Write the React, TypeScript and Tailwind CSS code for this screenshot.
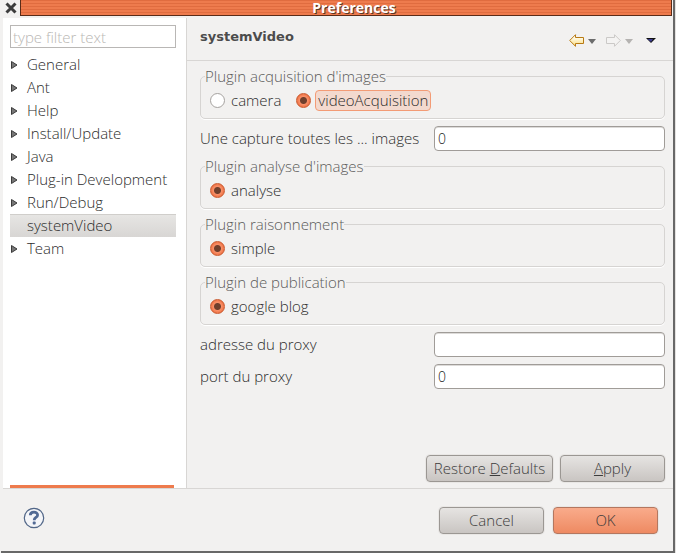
import React, { useState } from "react";

const treeItems = [
  { name: "General", expandable: true },
  { name: "Ant", expandable: true },
  { name: "Help", expandable: true },
  { name: "Install/Update", expandable: true },
  { name: "Java", expandable: true },
  { name: "Plug-in Development", expandable: true },
  { name: "Run/Debug", expandable: true },
  { name: "systemVideo", expandable: false },
  { name: "Team", expandable: true },
];

const buttonBase =
  "h-[27px] rounded-[4px] border text-center text-[15px] leading-[25px] shadow-[0_0_0_1px_#e9e7e5] text-[#3c3c3c]";
const greyButton = `${buttonBase} border-[#9b9793] bg-linear-to-b from-[#e6e4e2] to-[#c9c5c2]`;

function RadioGroup({
  title,
  name,
  options,
  initial,
  focused,
}: {
  title: string;
  name: string;
  options: string[];
  initial: string;
  focused?: boolean;
}) {
  const [value, setValue] = useState(initial);
  return (
    <fieldset className="min-w-0 rounded-[5px] border border-[#d6d4d2] pt-[5px] pb-[7px] pl-[9px] shadow-[0_1px_0_#ffffff]">
      <legend className="-ml-[5px] h-[17px] leading-[17px] whitespace-nowrap text-[#5a5a59]">{title}</legend>
      <div className="flex h-[21px] items-center gap-[13px]">
        {options.map((option) => (
          <label key={option} className="flex items-center gap-1">
            <input
              type="radio"
              name={name}
              checked={value === option}
              onChange={() => setValue(option)}
              className="h-[15px] w-[15px] appearance-none rounded-full border border-[#a5a29f] bg-white checked:border-[#c9592d] checked:bg-[radial-gradient(circle,#703f2c_0px,#703f2c_3px,#fa9068_4px,#ec6f42_7px)]"
            />
            <span
              className={
                focused && value === option
                  ? "flex h-[21px] items-center rounded-[4px] border border-[#f39b75] bg-[#f3d9ce] px-0.5 leading-[19px]"
                  : "flex h-[21px] items-center border border-transparent px-px leading-[19px]"
              }
            >
              {option}
            </span>
          </label>
        ))}
      </div>
    </fieldset>
  );
}

function Field({ id, label, value }: { id: string; label: string; value: string }) {
  return (
    <div className="grid h-[25px] grid-cols-[234px_1fr] items-center">
      <label htmlFor={id} className="whitespace-nowrap">
        {label}
      </label>
      <input
        id={id}
        type="text"
        defaultValue={value}
        className="h-[25px] w-full min-w-0 rounded-[4px] border border-[#a09c98] bg-white px-[3px] text-[14px] text-[#222222] shadow-[inset_0_1px_0_#dddbd9]"
      />
    </div>
  );
}

export default function App() {
  return (
    <div className="flex min-h-screen bg-[#f2f1f0] pl-px font-['Open_Sans','Liberation_Sans',sans-serif] text-[15px] font-light text-[#2c2c2c]">
      <div className="flex min-w-0 flex-1 flex-col border-r-2 border-b-2 border-[#686868] bg-[#f2f1f0]">
        <header className="flex h-4 shrink-0 pr-px">
          <button type="button" aria-label="Close" className="flex w-[19px] items-center justify-center">
            <svg width="14" height="12" viewBox="0 0 14 12">
              <path d="M2.5 1.5L11.5 10.5M11.5 1.5L2.5 10.5" stroke="#3c3c3c" strokeWidth="3" />
            </svg>
          </button>
          <div className="flex min-w-0 flex-1 justify-center border-r border-b border-l border-[#5b2c18] bg-[repeating-linear-gradient(to_bottom,#e06c3f_0px,#e06c3f_1px,#ee7b4d_1px,#ee7b4d_3px)] pl-4">
            <h1 className="text-[14px] leading-[15px] font-bold text-white [text-shadow:1px_1px_0_#5b3526]">Preferences</h1>
          </div>
        </header>

        <div className="mt-0.5 ml-0.5 flex flex-1 border-b border-[#d8d6d4]">
          <aside className="flex w-[184px] shrink-0 flex-col border-r border-[#d8d6d4] bg-white pt-[7px] pl-[7px]">
            <input
              type="text"
              aria-label="Filter"
              placeholder="type filter text"
              className="h-[23px] w-[166px] border border-[#b9b7b5] px-0.5 text-[15px] placeholder:text-[#b9b7b4]"
            />
            <ul className="mt-[5px] w-[166px]">
              {treeItems.map((item) => (
                <li key={item.name}>
                  <button
                    type="button"
                    className={
                      item.expandable
                        ? "flex h-[23px] w-full items-center"
                        : "flex h-[23px] w-full items-center bg-linear-to-b from-[#e7e6e4] to-[#d8d6d4] shadow-[inset_0_1px_0_#d0cecb]"
                    }
                  >
                    <span className="w-[17px] shrink-0">
                      {item.expandable && (
                        <svg className="ml-px" width="7" height="8" viewBox="0 0 7 8">
                          <path d="M0.5 0.5L6 4L0.5 7.5Z" fill="#777" stroke="#3c3c3c" />
                        </svg>
                      )}
                    </span>
                    <span className="whitespace-nowrap">{item.name}</span>
                  </button>
                </li>
              ))}
            </ul>
            <div className="mt-auto h-[3px] w-[164px] bg-[#ee7b4d]" />
          </aside>

          <main className="flex min-w-0 flex-1 flex-col">
            <div className="flex h-[43px] items-center justify-between border-b border-[#d8d6d4] pr-[17px] pb-1 pl-[13px]">
              <h2 className="font-['DejaVu_Sans',sans-serif] text-[13px] font-bold text-[#4c4c4c]">systemVideo</h2>
              <div className="flex items-center pt-1.5">
                <button type="button" aria-label="Back" className="flex items-center gap-1">
                  <svg width="15" height="13" viewBox="0 0 15 13">
                    <defs>
                      <linearGradient id="back-fill" x1="0" y1="0" x2="0" y2="1">
                        <stop offset="0.2" stopColor="#fffdf0" />
                        <stop offset="1" stopColor="#fbdc7c" />
                      </linearGradient>
                    </defs>
                    <path d="M0.7 6.5L6.5 0.7V3.5H14.5V9.5H6.5V12.3Z" fill="url(#back-fill)" stroke="#b87a14" />
                  </svg>
                  <svg className="mt-0.5" width="8" height="5" viewBox="0 0 8 5">
                    <path d="M0 0H8L4 5Z" fill="#6c6c6c" />
                  </svg>
                </button>
                <button type="button" aria-label="Forward" disabled className="ml-[10px] flex items-center gap-1">
                  <svg width="15" height="13" viewBox="0 0 15 13">
                    <path d="M14.3 6.5L8.5 0.7V3.5H0.5V9.5H8.5V12.3Z" fill="#f4f3f2" stroke="#cbc9c7" />
                  </svg>
                  <svg className="mt-0.5" width="8" height="5" viewBox="0 0 8 5">
                    <path d="M0 0H8L4 5Z" fill="#b5b3b1" />
                  </svg>
                </button>
                <button type="button" aria-label="Menu" className="ml-[13px]">
                  <svg width="10" height="5" viewBox="0 0 10 5">
                    <path d="M0 0H10L5 5Z" fill="#111111" />
                    <path d="M1.5 1H7L5 4Z" fill="#3d3d8f" />
                  </svg>
                </button>
              </div>
            </div>

            <form className="flex flex-1 flex-col gap-[7px] pt-[7px] pr-2 pb-1.5 pl-[13px]" onSubmit={(e) => e.preventDefault()}>
              <RadioGroup
                title="Plugin acquisition d'images"
                name="acquisition"
                options={["camera", "videoAcquisition"]}
                initial="videoAcquisition"
                focused
              />
              <Field id="capture" label="Une capture toutes les ... images" value="0" />
              <RadioGroup title="Plugin analyse d'images" name="analyse" options={["analyse"]} initial="analyse" />
              <RadioGroup title="Plugin raisonnement" name="raisonnement" options={["simple"]} initial="simple" />
              <RadioGroup title="Plugin de publication" name="publication" options={["google blog"]} initial="google blog" />
              <Field id="adresse" label="adresse du proxy" value="" />
              <Field id="port" label="port du proxy" value="0" />
              <div className="mt-auto flex justify-end gap-[7px]">
                <button type="button" className={`${greyButton} w-[127px] whitespace-nowrap`}>
                  Restore <span className="underline">D</span>efaults
                </button>
                <button type="submit" className={`${greyButton} w-[105px]`}>
                  <span className="underline">A</span>pply
                </button>
              </div>
            </form>
          </main>
        </div>

        <footer className="flex h-[62px] shrink-0 items-center justify-between pr-[15px] pl-[22px]">
          <button type="button" aria-label="Help" className="pb-1">
            <svg width="22" height="22" viewBox="0 0 22 22">
              <circle cx="11" cy="11" r="9.7" fill="#f4f5f8" stroke="#526788" strokeWidth="1.2" />
              <path d="M7.3 8.2C7.3 4.2 14.6 4.2 14.6 8C14.6 10.6 11.2 10.4 11.2 13.2" fill="none" stroke="#526a94" strokeWidth="2.8" />
              <rect x="9.7" y="14.6" width="3" height="2.8" rx="1" fill="#526a94" />
            </svg>
          </button>
          <div className="flex gap-[9px]">
            <button type="button" className={`${greyButton} w-[105px]`}>Cancel</button>
            <button
              type="button"
              className={`${buttonBase} w-[105px] border-[#b4775f] bg-linear-to-b from-[#f9ab8b] to-[#ee8a62]`}
            >
              OK
            </button>
          </div>
        </footer>
      </div>
      <div className="w-px shrink-0 bg-[#e4e2e0]" />
    </div>
  );
}
